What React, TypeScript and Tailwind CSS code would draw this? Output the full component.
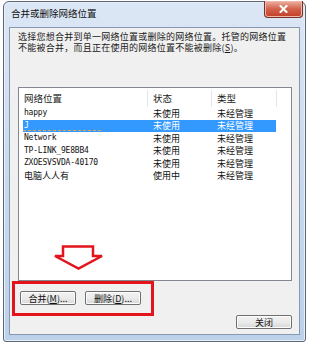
const rows = [
  { name: 'happy', status: '未使用', type: '未经管理', mono: true },
  { name: 'J', status: '未使用', type: '未经管理', mono: true, selected: true },
  { name: 'Network', status: '未使用', type: '未经管理', mono: true },
  { name: 'TP-LINK_9E8BB4', status: '未使用', type: '未经管理', mono: true },
  { name: 'ZXOESVSVDA-40170', status: '未使用', type: '未经管理', mono: true },
  { name: '电脑人人有', status: '使用中', type: '未经管理', mono: false },
]

const cjk = "font-['Noto_Sans_CJK_SC',sans-serif]"

function Button({ children, className = '' }: { children: React.ReactNode; className?: string }) {
  return (
    <div
      className={`flex h-[14px] w-[56px] items-center justify-center rounded-[2px] border border-[#707070] bg-gradient-to-b from-[#f2f2f2] via-[#ebebeb] to-[#d6d6d6] text-[9px] leading-none text-[#111] shadow-[inset_0_0_0_1px_#fcfcfc] ${className}`}
    >
      {children}
    </div>
  )
}

export default function App() {
  return (
    <div className={`h-[345px] w-[324px] overflow-hidden bg-white pt-[1px] pl-[3px] ${cjk}`}>
      <div className="flex h-[341px] w-[303px] flex-col rounded-t-[6px] rounded-b-[3px] border border-[#5b6776] bg-gradient-to-b from-[#dce7f5] via-[#c9daee] to-[#bcd1ea] shadow-[inset_0_0_0_1px_#e9f0fa]">
        {/* title bar */}
        <div className="flex h-[25px] items-start justify-between">
          <span className="pt-[7px] pl-[7px] text-[9.5px] leading-none text-[#111]">合并或删除网络位置</span>
          <div className="mr-[2px] -mt-[1px] flex h-[17px] w-[39px] items-center justify-center rounded-b-[4px] border border-t-0 border-[#7a3126] bg-gradient-to-b from-[#eab2a5] via-[#d2604a] to-[#c13d27] shadow-[inset_0_0_0_1px_#f0b8aa]">
            <svg width="9" height="8" viewBox="0 0 9 8">
              <path d="M1.5 1 L7.5 7 M7.5 1 L1.5 7" stroke="#fff" strokeWidth="2" strokeLinecap="square" />
            </svg>
          </div>
        </div>

        {/* client area */}
        <div className="relative mx-[5px] mb-[6px] flex flex-1 flex-col border border-[#8799b0] bg-[#f0f0f0] pt-[4px] pr-[7px] pb-[5px] pl-[8px]">
          <p className="text-[9px] leading-[10.5px] tracking-[0.25px] text-[#1a1a1a]">
            <span className="block whitespace-nowrap">选择您想合并到单一网络位置或删除的网络位置。托管的网络位置</span>
            <span className="block whitespace-nowrap">
              不能被合并，而且正在使用的网络位置不能被删除(<span className="underline">S</span>)。
            </span>
          </p>

          {/* list */}
          <div className="mt-[34px] flex h-[194px] w-[274px] flex-col border border-[#828790] bg-white">
            <div className="flex h-[19px] items-center pt-[2px] text-[9.5px] text-[#222]">
              <div className="flex h-full w-[129px] items-center border-r border-[#e2e6eb] pl-[5px]">网络位置</div>
              <div className="flex h-full w-[64px] items-center border-r border-[#e2e6eb] pl-[5px]">状态</div>
              <div className="flex h-full w-[65px] items-center border-r border-[#e2e6eb] pl-[5px]">类型</div>
            </div>
            {rows.map((r) => (
              <div
                key={r.name}
                className={`relative ml-[4px] flex h-[12.5px] w-[253px] items-center text-[9px] leading-none ${
                  r.selected ? 'bg-[#3399ff] text-white' : 'text-[#111]'
                }`}
              >
                <div
                  className={`w-[130px] pl-[1px] ${
                    r.mono ? "font-['DejaVu_Sans_Mono',monospace] text-[8px] tracking-[-0.2px]" : ''
                  }`}
                >
                  {r.name}
                </div>
                <div className="w-[64px]">{r.status}</div>
                <div>{r.type}</div>
                {r.selected && (
                  <span className="absolute bottom-[1px] left-0 w-[78px] border-b border-dashed border-[#e6a25a]" />
                )}
              </div>
            ))}
          </div>

          {/* action buttons */}
          <div className="mt-[10px] ml-[2px] flex gap-[9px]">
            <Button>
              合并(<span className="underline">M</span>)...
            </Button>
            <Button>
              删除(<span className="underline">D</span>)...
            </Button>
          </div>
          <div className="mt-[10px] flex justify-end">
            <Button>关闭</Button>
          </div>

          {/* annotation: arrow + red frame */}
          <svg
            className="absolute left-[43px] top-[217px]"
            width="51"
            height="26"
            viewBox="0 0 51 26"
          >
            <polygon
              points="10,1.5 40,1.5 40,11 49,11 25.5,23.5 2,11 10,11"
              fill="#fff"
              stroke="#e3141b"
              strokeWidth="2.5"
              strokeLinejoin="miter"
            />
          </svg>
          <div className="absolute left-[2px] top-[253px] h-[35px] w-[142px] border-[3px] border-[#e3141b]" />
        </div>
      </div>
    </div>
  )
}
